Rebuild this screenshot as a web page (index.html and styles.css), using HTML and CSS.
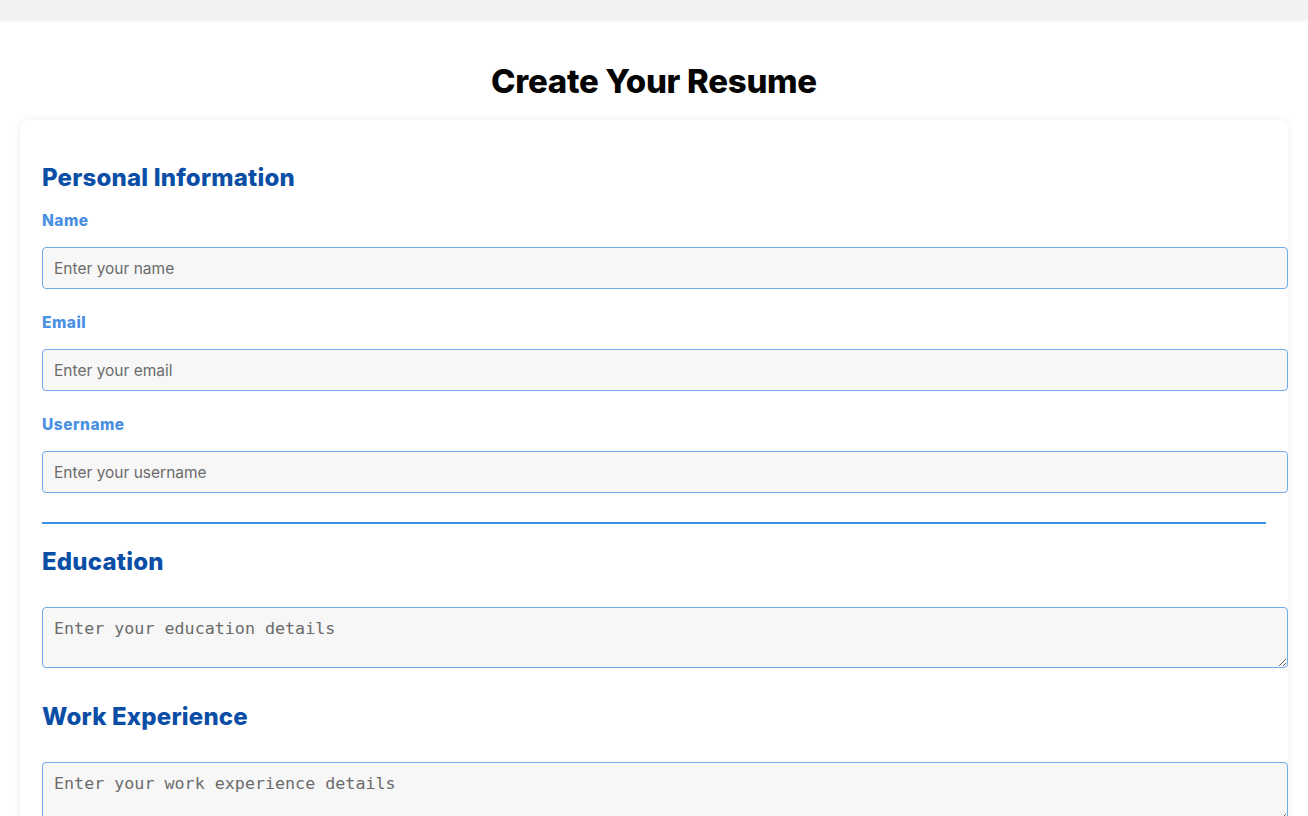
FILE: index.html
```html
<!DOCTYPE html>
<html lang="en">
<head>
<meta charset="utf-8">
<title>Create Your Resume</title>
<link rel="stylesheet" href="styles.css">
</head>
<body>
<header class="topbar"></header>
<main class="page">
  <h1 class="page-title">Create Your Resume</h1>
  <form class="card">
    <h2 class="section-title first">Personal Information</h2>
    <label class="field-label" for="name">Name</label>
    <input class="field-input" id="name" type="text" placeholder="Enter your name">
    <label class="field-label" for="email">Email</label>
    <input class="field-input" id="email" type="email" placeholder="Enter your email">
    <label class="field-label" for="username">Username</label>
    <input class="field-input" id="username" type="text" placeholder="Enter your username">
    <hr class="divider">
    <h2 class="section-title">Education</h2>
    <textarea class="field-area" placeholder="Enter your education details"></textarea>
    <h2 class="section-title">Work Experience</h2>
    <textarea class="field-area" placeholder="Enter your work experience details"></textarea>
  </form>
</main>
</body>
</html>
```
FILE: styles.css
```css
html, body {
  margin: 0;
  padding: 0;
  background: #ffffff;
  font-family: Inter, "Noto Sans", sans-serif;
}

.topbar {
  height: 20px;
  background: #f2f2f2;
  box-shadow: 0 2px 3px rgba(0, 0, 0, 0.04);
}

.page {
  padding: 0 20px 40px;
}

.page-title {
  margin: 0;
  padding-top: 44px;
  height: 56px;
  line-height: 34px;
  font-size: 33px;
  font-weight: 800;
  text-align: center;
  color: #050505;
  letter-spacing: -0.3px;
}

.card {
  display: block;
  background: #ffffff;
  border-radius: 8px;
  box-shadow: 0 0 8px rgba(0, 0, 0, 0.07);
  padding: 22px;
}

.section-title {
  margin: 22px 0 0;
  font-size: 24px;
  line-height: 30px;
  font-weight: 800;
  color: #0b4ea6;
  letter-spacing: 0.2px;
}

.section-title.first {
  margin-top: 21px;
}

.field-label {
  display: block;
  margin-top: 18px;
  font-size: 15.5px;
  line-height: 20px;
  font-weight: 800;
  color: #4a90e2;
  letter-spacing: 0.5px;
}

.field-input {
  display: block;
  box-sizing: content-box;
  margin: 16px 0 24px;
  padding: 10px 11px;
  width: calc(100% - 2px);
  height: 20px;
  border: 1px solid #72aaec;
  border-radius: 4px;
  background: #f7f7f7;
  font-family: Inter, "Noto Sans", sans-serif;
  font-size: 15.5px;
  color: #222;
}

.field-input + .field-label {
  margin-top: 0;
}

.field-input::placeholder {
  color: #6b6b6b;
}

.divider {
  margin: 29px 0 0;
  border: 0;
  height: 2px;
  background: #3a8ee6;
}

.divider + .section-title {
  margin-top: 23px;
}

.field-area {
  display: block;
  box-sizing: border-box;
  width: calc(100% + 22px);
  height: 61px;
  margin: 30px 0 34px;
  padding: 10px 11px;
  border: 1px solid #72aaec;
  border-radius: 4px;
  background: #f7f7f7;
  font-family: "DejaVu Sans Mono", "Liberation Mono", monospace;
  font-size: 16.7px;
  line-height: 20px;
  color: #222;
}

.field-area + .section-title {
  margin-top: 0;
}

.field-area::placeholder {
  color: #6b6b6b;
}
```
